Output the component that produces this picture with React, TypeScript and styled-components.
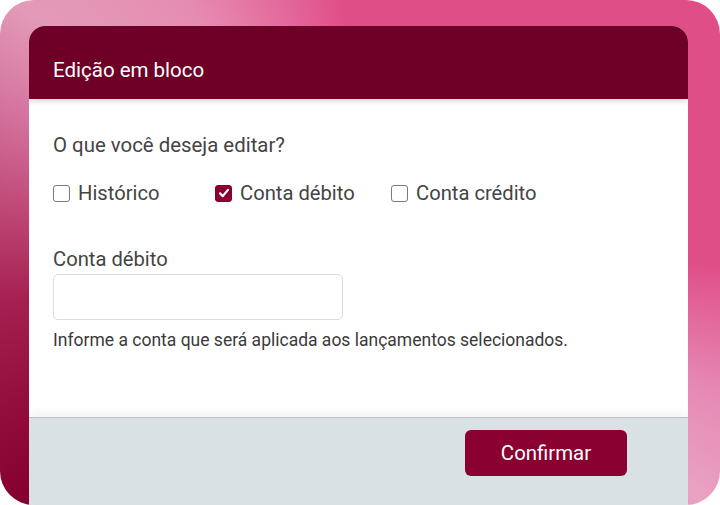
import React from "react";
import styled, { createGlobalStyle } from "styled-components";

const GlobalStyle = createGlobalStyle`
  html, body {
    margin: 0;
    padding: 0;
    background: #ffffff;
    font-family: Roboto, "Liberation Sans", Arial, sans-serif;
  }
`;

export const Frame = styled.div`
  width: 720px;
  height: 505px;
  box-sizing: border-box;
  border-radius: 34px;
  overflow: hidden;
  padding: 26px 32px 0 29px;
  display: flex;
  background: conic-gradient(
    from 0deg at 50% 50%,
    #e04e88 0deg,
    #e04e88 92deg,
    #e68ab5 112deg,
    #e9a2c2 126deg,
    #85002f 234deg,
    #95103e 248deg,
    #a52050 262deg,
    #c04a78 278deg,
    #d576a0 293deg,
    #e39ab8 306deg,
    #e68cb2 325deg,
    #e36a9c 342deg,
    #e04e88 356deg
  );
`;

export const Dialog = styled.div`
  flex: 1;
  display: flex;
  flex-direction: column;
  background: #ffffff;
  border-radius: 16px 16px 0 0;
  overflow: hidden;
`;

export const Header = styled.div`
  height: 73px;
  flex-shrink: 0;
  display: flex;
  align-items: center;
  padding: 14px 24px 0;
  box-sizing: border-box;
  background: #6e0028;
  box-shadow: 0 2px 6px rgba(0, 0, 0, 0.18);
  position: relative;
  z-index: 1;
`;

export const Title = styled.h2`
  margin: 0;
  font-size: 20.5px;
  font-weight: 400;
  color: #ffffff;
`;

export const Body = styled.div`
  flex: 1;
  padding: 33px 24px 0;
  color: #444444;
`;

export const Question = styled.p`
  margin: 0;
  font-size: 20.4px;
  line-height: 26px;
`;

export const OptionRow = styled.div`
  display: grid;
  grid-template-columns: 162px 176px auto;
  margin-top: 22px;
`;

export const Option = styled.label`
  display: flex;
  align-items: center;
  gap: 8px;
  font-size: 20.2px;
  line-height: 26px;
  color: #444444;
`;

export const Box = styled.span<{ checked?: boolean }>`
  width: 17px;
  height: 17px;
  box-sizing: border-box;
  border-radius: 3px;
  border: 1.5px solid ${(p) => (p.checked ? "#8a0030" : "#7a7a7a")};
  background: ${(p) => (p.checked ? "#8a0030" : "#ffffff")};
  display: flex;
  align-items: center;
  justify-content: center;
`;

export const FieldLabel = styled.div`
  margin-top: 40px;
  font-size: 20.2px;
  line-height: 26px;
`;

export const Input = styled.input`
  display: block;
  margin-top: 2px;
  width: 290px;
  height: 46px;
  box-sizing: border-box;
  border: 1px solid #dcdcdc;
  border-radius: 5px;
  background: #ffffff;
  outline: none;
`;

export const Help = styled.p`
  margin: 9px 0 0;
  font-size: 17.5px;
  line-height: 22px;
  color: #3a3a3a;
`;

export const Footer = styled.div`
  height: 88px;
  flex-shrink: 0;
  box-sizing: border-box;
  background: #dae1e5;
  border-top: 1px solid #b9bec1;
  box-shadow: 0 -4px 10px rgba(0, 0, 0, 0.05);
  display: flex;
  justify-content: flex-end;
  align-items: flex-start;
  padding: 12px 61px 0 0;
`;

export const Button = styled.button`
  width: 162px;
  height: 46px;
  border: none;
  border-radius: 6px;
  background: #8a0030;
  color: #ffffff;
  font-family: inherit;
  font-size: 20.4px;
  cursor: pointer;
`;

const Check = () => (
  <svg width="12" height="12" viewBox="0 0 10 10">
    <path d="M1.7 5.3 L4 7.6 L8.3 2.4" fill="none" stroke="#fff" strokeWidth="1.9" strokeLinecap="round" strokeLinejoin="round" />
  </svg>
);

const options = [
  { label: "Histórico", checked: false },
  { label: "Conta débito", checked: true },
  { label: "Conta crédito", checked: false },
];

export default function App() {
  return (
    <>
      <GlobalStyle />
      <Frame>
        <Dialog>
          <Header>
            <Title>Edição em bloco</Title>
          </Header>
          <Body>
            <Question>O que você deseja editar?</Question>
            <OptionRow>
              {options.map((o) => (
                <Option key={o.label}>
                  <Box checked={o.checked}>{o.checked && <Check />}</Box>
                  {o.label}
                </Option>
              ))}
            </OptionRow>
            <FieldLabel>Conta débito</FieldLabel>
            <Input type="text" />
            <Help>Informe a conta que será aplicada aos lançamentos selecionados.</Help>
          </Body>
          <Footer>
            <Button>Confirmar</Button>
          </Footer>
        </Dialog>
      </Frame>
    </>
  );
}
